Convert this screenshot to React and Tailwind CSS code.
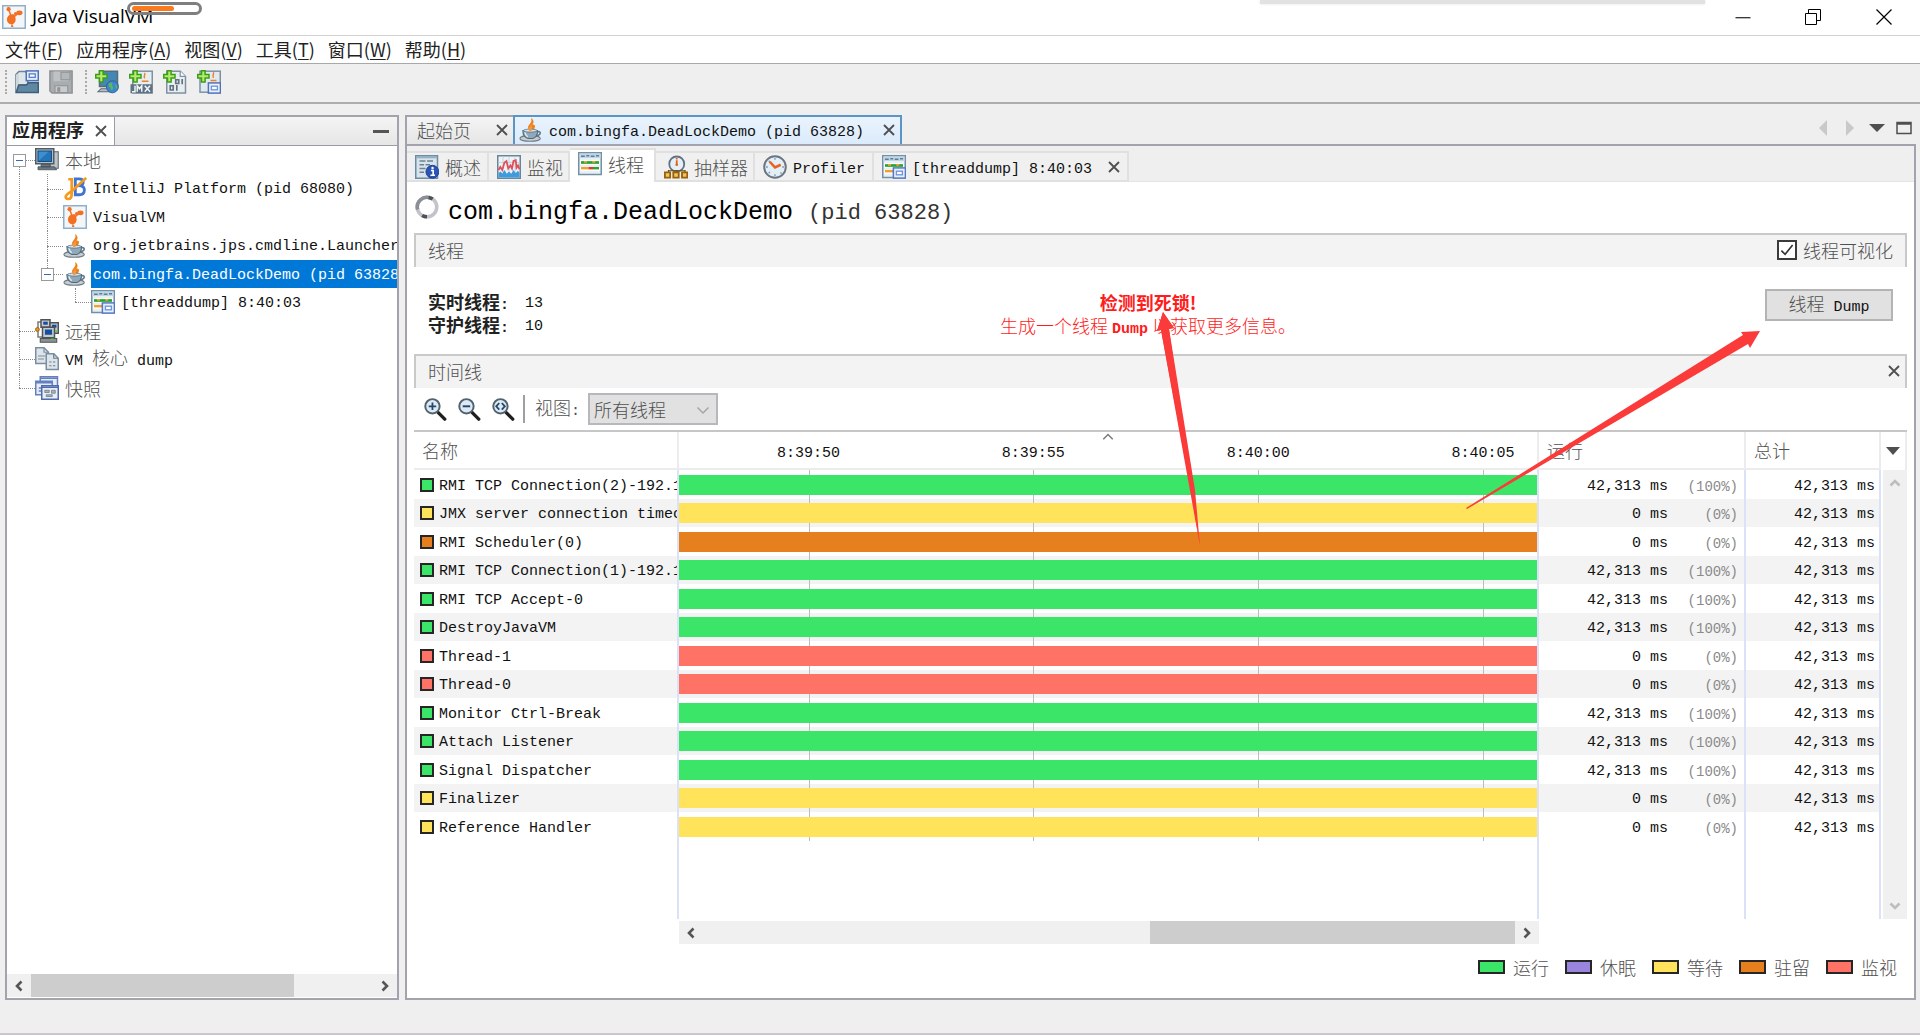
const MONO = "font-['Liberation_Mono','Noto_Sans_CJK_SC',monospace] text-[15px]";
const CJK = "font-['Noto_Sans_CJK_SC',sans-serif] text-[18px] font-light text-[#505050]";
const CJK_BOLD = "font-['Noto_Sans_CJK_SC',sans-serif] text-[18px] font-bold";

const MENUS = [
  ["文件", "F"], ["应用程序", "A"], ["视图", "V"], ["工具", "T"], ["窗口", "W"], ["帮助", "H"],
];

const GREEN = "bg-[#3be567]";
const YELLOW = "bg-[#ffe35a]";
const ORANGE = "bg-[#e67f1e]";
const RED = "bg-[#ff7266]";
const PURPLE = "bg-[#9a85de]";

const THREADS = [
  { name: "RMI TCP Connection(2)-192.1", color: GREEN, running: true },
  { name: "JMX server connection timeout", color: YELLOW },
  { name: "RMI Scheduler(0)", color: ORANGE },
  { name: "RMI TCP Connection(1)-192.1", color: GREEN, running: true },
  { name: "RMI TCP Accept-0", color: GREEN, running: true },
  { name: "DestroyJavaVM", color: GREEN, running: true },
  { name: "Thread-1", color: RED },
  { name: "Thread-0", color: RED },
  { name: "Monitor Ctrl-Break", color: GREEN, running: true },
  { name: "Attach Listener", color: GREEN, running: true },
  { name: "Signal Dispatcher", color: GREEN, running: true },
  { name: "Finalizer", color: YELLOW },
  { name: "Reference Handler", color: YELLOW },
];

const TICKS = [
  { time: "8:39:50", at: 15.1 },
  { time: "8:39:55", at: 41.3 },
  { time: "8:40:00", at: 67.5 },
  { time: "8:40:05", at: 93.7 },
];

const LEGEND = [
  ["运行", GREEN], ["休眠", PURPLE], ["等待", YELLOW], ["驻留", ORANGE], ["监视", RED],
];

/* ---------- icons ---------- */

function Svg({ size = 24, box = 16, className = "", children }) {
  return (
    <svg width={size} height={size} viewBox={`0 0 ${box} ${box}`} className={`shrink-0 ${className}`} aria-hidden="true">
      {children}
    </svg>
  );
}

function VisualVmIcon() {
  return (
    <Svg>
      <rect x="0.5" y="0.5" width="15" height="15" fill="#f4f5f6" stroke="#8fb0cc" />
      <circle cx="4.4" cy="2.8" r="1.4" fill="#f36f21" />
      <path d="M4.600 3.500l1.400 3.500" stroke="#f36f21" strokeWidth="1" />
      <ellipse cx="6.2" cy="9.600" rx="2.900" ry="3.300" fill="#f36f21" />
      <path d="M6.500 6.200h2v2zM6.500 12l1.200 2.600H6z" fill="#f36f21" />
      <path d="M8 8l2.600-2.400" stroke="#f36f21" />
      <ellipse cx="11.6" cy="5.200" rx="2.1" ry="1.6" fill="#f36f21" />
      <circle cx="9" cy="5.600" r="1" fill="#f36f21" />
    </Svg>
  );
}

function JavaIcon() {
  return (
    <Svg>
      <path d="M7.6 8.2C4.500 6.500 6.800 4.600 7.800 3.200c.6-.9.6-1.900.2-3.200 2 1.300 2.200 3 .9 4.300 2.400-.3 2.300 2.400.2 3.900z" fill="#f08019" />
      <ellipse cx="7.4" cy="13.600" rx="6.800" ry="1.900" fill="#c7cdd1" stroke="#717c85" strokeWidth="0.7" />
      <path d="M12 9.300c2.600-.9 3.400 1.700-.8 2.600" fill="none" stroke="#607a8d" strokeWidth="1.1" />
      <path d="M2.600 8.300h9.700c.3 3-1.300 5-3.100 5.300H6C4 13 2.500 11.400 2.600 8.300z" fill="#8fa9bb" stroke="#516a7c" strokeWidth="0.7" />
      <path d="M4 9.500c.2 1.500.8 2.400 1.800 3" stroke="#e4edf3" fill="none" />
      <ellipse cx="7.5" cy="8.4" rx="4.6" ry="1" fill="#d9e2e8" stroke="#516a7c" strokeWidth="0.5" />
      <path d="M7 8.600c-1.600-1.900.6-2.700 1.200-4.200.8 1.500.8 2.800 0 4.200z" fill="#f6953a" />
    </Svg>
  );
}

function IntellijIcon() {
  return (
    <Svg>
      <path d="M8.200 1.200h2.600c3.600 0 3.300 4 .6 4.600 4 .6 3.700 6-.4 6H8.200z" fill="none" stroke="#3f74d1" strokeWidth="1.9" />
      <path d="M8.200 6h3.500" stroke="#3f74d1" strokeWidth="1.5" />
      <path d="M3.500 1.500h2.300v9.800c0 4.600-5 4-3.800 1.200.6-1.300 2.200-2 4-3.200L15.500.6" fill="none" stroke="#f59a1b" strokeWidth="1.8" />
    </Svg>
  );
}

function LocalIcon() {
  return (
    <Svg>
      <rect x="10" y="2.5" width="5.5" height="11" fill="#bdc4ca" stroke="#5d6871" strokeWidth="0.7" />
      <rect x="0.5" y="0.5" width="12" height="10" fill="#b9c0c6" stroke="#4f5c66" />
      <rect x="2" y="2" width="9" height="7" fill="#2275b8" stroke="#174d80" strokeWidth="0.7" />
      <path d="M2.500 8.500L9 2.500H2.500z" fill="#3d8fce" />
      <path d="M4 11h6v1.500H4zM2 12.500h11l1.500 2H2z" fill="#6c7983" stroke="#414c55" strokeWidth="0.5" />
    </Svg>
  );
}

function RemoteIcon() {
  return (
    <Svg>
      <path d="M5 2H2v10h3" fill="none" stroke="#7b7b7b" />
      <circle cx="1.6" cy="7" r="1.3" fill="#e8921f" stroke="#8a540c" strokeWidth="0.5" />
      <rect x="4" y="0.5" width="6" height="5" fill="#c5cbd0" stroke="#4f5357" />
      <rect x="5.5" y="1.8" width="3" height="2" fill="#164d9f" />
      <rect x="10" y="2.5" width="5.5" height="7" fill="#c5cbd0" stroke="#4f5357" />
      <rect x="11.3" y="3.8" width="3" height="2" fill="#164d9f" />
      <rect x="5" y="5.5" width="8" height="7" fill="#c5cbd0" stroke="#4f5357" />
      <rect x="6.6" y="7" width="4.8" height="3.5" fill="#164d9f" />
      <path d="M3.500 13h11v2.500h-11z" fill="#8a9299" stroke="#4f5357" strokeWidth="0.7" />
      <path d="M10.500 13.500h2M13.500 8h1.500" stroke="#54cc2c" />
    </Svg>
  );
}

function CoreDumpIcon() {
  return (
    <Svg>
      <path d="M.5.5H6L9 3.500v7.500H.5z" fill="#dde4ea" stroke="#7b8ea0" />
      <path d="M6 .5v3h3M2 6h5M2 8h4" fill="none" stroke="#7b8ea0" strokeWidth="0.8" />
      <path d="M7.500 4.500h5l3 3V15h-8z" fill="#dde4ea" stroke="#7b8ea0" />
      <path d="M12.500 4.500v3h3M9.500 10H11m1 0h1.500M9.500 12.500H11m1 0h1.500" fill="none" stroke="#687b8d" strokeWidth="0.8" />
    </Svg>
  );
}

function SnapshotIcon() {
  return (
    <Svg>
      <rect x="3.5" y="0.5" width="11.5" height="9" fill="#e6ecf6" stroke="#6480bf" />
      <path d="M3.500 1.500H15" stroke="#6480bf" />
      <rect x="0.5" y="3.5" width="11" height="9" fill="#e6ecf6" stroke="#6480bf" />
      <path d="M.5 4.500h11M2.500 8h2M2.500 10h2" stroke="#6480bf" />
      <rect x="4.5" y="6.5" width="11" height="9" fill="#e9eef4" stroke="#4e6bb0" />
      <path d="M4.500 7.500h11" stroke="#4e6bb0" />
      <path d="M6.500 9.500h3V11h-3zM11 9.500h2.500v2H11zM7.500 12.500h4v1.200h-4z" fill="#a7b3be" stroke="#6b7987" strokeWidth="0.5" />
    </Svg>
  );
}

function ThreadsIcon({ dump }) {
  return (
    <Svg>
      <rect x="0.5" y="0.5" width="15" height="14.5" fill="#e9f0f5" stroke="#7590a5" />
      <path d="M1 2.500h14" stroke="#c0d6e6" strokeWidth="3" />
      <path d="M2 2.800h2.500m1-.3h2m1 .3H11m1-.3h2" stroke="#5d7e98" strokeWidth="0.9" />
      <path d="M1.500 5.500h13v3h-13zM1.500 10h13v2.500h-13z" fill="#fff" />
      <path d="M2 7h12" stroke="#27a52b" strokeWidth="1.8" />
      <path d="M4 6.600h2m3.500 0h2" stroke="#f0a32c" strokeWidth="1.2" />
      <path d="M2 10.800h5" stroke="#f0a32c" strokeWidth="1.6" />
      <path d="M7 10.800h3" stroke="#e03a26" strokeWidth="1.6" />
      <path d="M10 10.800h4" stroke="#27a52b" strokeWidth="1.6" />
      {dump && (
        <>
          <rect x="7.6" y="8.6" width="8" height="6.8" fill="#e8f1fd" stroke="#5678c4" />
          <rect x="9.6" y="10.8" width="4" height="2.4" fill="#fff" stroke="#6e95de" strokeWidth="0.9" />
        </>
      )}
    </Svg>
  );
}

function OverviewIcon() {
  return (
    <Svg>
      <rect x="0.5" y="0.5" width="14.5" height="15" fill="#d8e4ec" stroke="#6d8ba3" />
      <path d="M1 1.500h13.500" stroke="#93b0c6" strokeWidth="1.4" />
      <path d="M3 4h4m1 0h4M3 6.500h3m1 0h3M3 9h4M3 11.500h3" stroke="#6d8292" strokeWidth="0.9" />
      <circle cx="11.6" cy="11.2" r="4.3" fill="#2a55b5" stroke="#153a89" strokeWidth="0.6" />
      <path d="M10.600 10.300h1.500v3M10.300 13.500h3" stroke="#fff" strokeWidth="1.1" fill="none" />
      <circle cx="11.7" cy="8.7" r="0.8" fill="#fff" />
    </Svg>
  );
}

function MonitorIcon() {
  return (
    <Svg>
      <rect x="0.5" y="0.5" width="15" height="15" fill="#edf3f7" stroke="#67859b" />
      <path d="M4 1v14M8 1v14M12 1v14M1 5h14" stroke="#c4d2dc" strokeWidth="0.6" />
      <path d="M1 15v-3l1.500-1 1 1.500L5 10l1.500 2.500L8 11l1.500 1.500L11 10l1.500 2L14 10.500l1 1.500v3z" fill="#3e9bdd" />
      <path d="M1 10l1.200-2 1.300 2L5 5l1.300-1 1.200 5 1.500-2 1 2 1-5 1.500-.500.500 5 1-1.500 1 2.500" fill="none" stroke="#e0505a" strokeWidth="1.2" />
    </Svg>
  );
}

function SamplerIcon() {
  return (
    <Svg>
      <circle cx="8.5" cy="6" r="5" fill="#e6eff6" stroke="#5f7183" strokeWidth="1.2" />
      <path d="M8.500 2v1m0 .5v3" stroke="#e0641c" strokeWidth="1.2" />
      <circle cx="8.5" cy="6.5" r="0.9" fill="#e0641c" />
      <path d="M3 10.500h11M3 10v2m5.500-2v2m5.500-2v2" stroke="#6d4b10" strokeWidth="0.8" />
      <path d="M.6 11.600h3.500v3.500H.6zM6.200 11.600h3.600v3.500H6.200zM12 11.600h3.500v3.500H12z" fill="#f3c457" stroke="#96600c" strokeWidth="1.2" />
    </Svg>
  );
}

function ProfilerIcon() {
  return (
    <Svg>
      <circle cx="8" cy="8" r="7.2" fill="#e2eef8" stroke="#6b7680" strokeWidth="1.3" />
      <path d="M8 2v1.200M8 12.800V14M2 8h1.200M12.800 8H14M3.800 3.800l.8.8M11.600 11.600l.8.8M3.800 12.200l.8-.8" stroke="#7c98b0" strokeWidth="0.9" />
      <path d="M4.500 4.500L8 8.300l3.800-1.800" fill="none" stroke="#e8641c" strokeWidth="1.7" />
    </Svg>
  );
}

function Plus() {
  return <path d="M3 .5h2.400V3H8v2.400H5.400V8H3V5.400H.5V3H3z" fill="#b5ec6c" stroke="#3b9e17" />;
}

function OpenIcon() {
  return (
    <Svg>
      <path d="M.6 15V3l2-2H7l1.500 2v7H.6z" fill="#dfe6ea" stroke="#6c8495" />
      <path d="M.6 3v12l2-5V3z" fill="#cdd7dd" />
      <rect x="7.5" y="0.6" width="8" height="6.5" fill="#e2ecfa" stroke="#5272b8" />
      <rect x="9.5" y="2.6" width="4" height="2.3" fill="#fff" stroke="#5c83ca" strokeWidth="0.9" />
      <path d="M2.500 10h5L9 8.500h6.500V15H.8z" fill="#5f88a3" stroke="#3d5f77" />
    </Svg>
  );
}

function SaveIcon() {
  return (
    <Svg>
      <path d="M.6.6h14.800v14.800H2L.6 14z" fill="#a9adb0" stroke="#8e9396" />
      <path d="M3 1h10v6.500H3z" fill="#bfc2c4" />
      <rect x="8" y="1.5" width="6" height="5" fill="#b3b7ba" stroke="#8f9498" strokeWidth="0.7" />
      <path d="M4 10.500h8.500V15H4z" fill="#c8cbcd" stroke="#8e9396" strokeWidth="0.7" />
      <path d="M5.500 11.500h2v3h-2z" fill="#8e9396" />
    </Svg>
  );
}

function RemoteAddIcon() {
  return (
    <Svg>
      <path d="M3 .8h12V11H3z" fill="#4287b5" stroke="#5b6a75" />
      <path d="M4 12.500h8v2H2z" fill="#b8bec3" stroke="#5b6a75" strokeWidth="0.7" />
      <circle cx="11.6" cy="11.2" r="4" fill="#3a86cf" stroke="#2c5f94" strokeWidth="0.6" />
      <path d="M9 9.500c1.500-2 3-1 2.500.5s1.500 1 .5 2.500-1 1.500-1.500 0-1.500-1-1.500-3zM13.500 9l1.500 2-1 2z" fill="#5cb757" />
      <Plus />
    </Svg>
  );
}

function JmxAddIcon() {
  return (
    <Svg>
      <rect x="2.5" y="0.8" width="13" height="14.5" fill="#e8edf1" stroke="#7c92a4" />
      <path d="M10.300 2c1 1.200-1 2 .2 3.600M8.500 7.500H13" stroke="#e98328" fill="none" />
      <rect x="1" y="9.5" width="14.500" height="6" fill="#5d7282" />
      <path d="M4 10.500v4H2m3.500 0v-4L7 12.500l1.500-2v4m2-4l3.500 4m0-4l-3.500 4" stroke="#f2f5f7" fill="none" />
      <Plus />
    </Svg>
  );
}

function CoreAddIcon() {
  return (
    <Svg>
      <path d="M2.500.8h9L15 4.300v11H2.500z" fill="#e8edf1" stroke="#7c92a4" />
      <path d="M11.500.8v3.500H15" fill="#fff" stroke="#7c92a4" strokeWidth="0.8" />
      <path d="M8.500 6.500h2V9h-2zM12.800 6v3.500M4.800 10.500h2v2.800h-2zM9.200 10v3.800" fill="none" stroke="#60727f" strokeWidth="1.1" />
      <Plus />
    </Svg>
  );
}

function SnapshotAddIcon() {
  return (
    <Svg>
      <rect x="2" y="0.8" width="13.5" height="14" fill="#e3eaef" stroke="#7c92a4" />
      <path d="M10.800 1.500c1 1.200-1 2 .2 3.800M9 7h4" stroke="#e98328" fill="none" />
      <rect x="7.6" y="8.6" width="8" height="6.8" fill="#e8f1fd" stroke="#5272b8" />
      <rect x="9.6" y="10.8" width="4" height="2.4" fill="#fff" stroke="#6e95de" strokeWidth="0.9" />
      <Plus />
    </Svg>
  );
}

function ZoomIcon({ kind }) {
  return (
    <Svg>
      <path d="M9.500 9.800l5 5" stroke="#1f1f1f" strokeWidth="2.2" strokeLinecap="round" />
      <circle cx="6.3" cy="6.2" r="4.8" fill="#dceaf5" stroke="#52616e" strokeWidth="1.3" />
      {kind === "in" && <path d="M3.800 6.200h5M6.300 3.700v5" stroke="#24476b" strokeWidth="1.2" />}
      {kind === "out" && <path d="M3.800 6.200h5" stroke="#24476b" strokeWidth="1.3" />}
      {kind === "fit" && <path d="M5.500 4l-2 2.200 2 2.200M7.200 4l2 2.200-2 2.200" fill="none" stroke="#24476b" strokeWidth="1.2" />}
    </Svg>
  );
}

function CloseIcon({ size = 14 }) {
  return (
    <Svg size={size} box={14}>
      <path d="M2 2l10 10M12 2L2 12" stroke="#4f4f4f" strokeWidth="1.8" />
    </Svg>
  );
}

function Chevron({ d, color = "#555" }) {
  return (
    <Svg size={14} box={14}>
      <path d={d} fill="none" stroke={color} strokeWidth="2.6" />
    </Svg>
  );
}

const LEFT = "M9.5 2.5L5 7l4.5 4.5";
const RIGHT = "M4.5 2.5L9 7l-4.500 4.500";
const UP = "M2.5 9.5L7 5l4.500 4.500";
const DOWN = "M2.5 4.5L7 9l4.500-4.500";

/* ---------- window chrome ---------- */

function TitleBar() {
  return (
    <header className="relative flex h-9 shrink-0 items-center border-b border-[#d3d3d3] bg-white pb-0.5 pl-0.5">
      <VisualVmIcon />
      <h1 className="ml-1.5 font-['Open_Sans',sans-serif] text-[19px] text-black">Java VisualVM</h1>
      <div className="absolute left-[127px] top-0.5 h-[13px] w-[75px] rounded-full border-[3px] border-[#7f7f7f] px-0.5 py-px">
        <div className="h-[5px] w-[42px] rounded-full bg-[#fb7a1e]" />
      </div>
      <div className="absolute left-[1260px] top-0 h-1 w-[445px] bg-[#e2e2e2] shadow-[0_0_3px_#e2e2e2]" />
      <div className="ml-auto flex h-full">
        <button type="button" aria-label="最小化" className="flex w-[70px] items-center justify-center">
          <Svg><path d="M3 8.500h10" stroke="#000" strokeWidth="0.7" /></Svg>
        </button>
        <button type="button" aria-label="还原" className="flex w-[70px] items-center justify-center">
          <Svg size={16}>
            <path d="M.5 4.500h11v11H.5zM3.500 4V.500h12v11H12" fill="none" stroke="#000" />
          </Svg>
        </button>
        <button type="button" aria-label="关闭" className="flex w-[72px] items-center justify-center">
          <Svg size={16}><path d="M.5.5l15 15M15.500.5l-15 15" stroke="#000" strokeWidth="1.2" /></Svg>
        </button>
      </div>
    </header>
  );
}

function MenuBar() {
  return (
    <nav className="flex h-7 shrink-0 items-start gap-[13px] border-b border-[#a9a9a9] bg-white pl-[5px]">
      {MENUS.map(([label, key]) => (
        <button key={key} type="button" className="font-['Noto_Sans_CJK_SC',sans-serif] text-[18px] leading-[26px] text-[#222]">
          {label}(<span className="underline underline-offset-2">{key}</span>)
        </button>
      ))}
    </nav>
  );
}

function Grip() {
  return <div className="-mr-0.5 h-6 border-l-2 border-dotted border-[#aaa]" />;
}

function ToolBar() {
  return (
    <div className="flex h-10 shrink-0 items-center border-b-2 border-[#adadad] pb-0.5 pl-[5px]">
      <div className="flex gap-2.5">
        <Grip />
        <button type="button" aria-label="装入"><OpenIcon /></button>
        <button type="button" aria-label="另存为"><SaveIcon /></button>
      </div>
      <div className="ml-3 flex gap-2.5">
        <Grip />
        <button type="button" aria-label="添加远程主机"><RemoteAddIcon /></button>
        <button type="button" aria-label="添加 JMX 连接"><JmxAddIcon /></button>
        <button type="button" aria-label="添加 VM 核心 dump"><CoreAddIcon /></button>
        <button type="button" aria-label="添加快照"><SnapshotAddIcon /></button>
      </div>
    </div>
  );
}

/* ---------- applications tree ---------- */

// guides: one letter per indent level
// b = root box, e = nested box, v = line, t = tee, l = corner, s = space
const TREE = [
  { guides: "b", icon: <LocalIcon />, label: "本地", cjk: true },
  { guides: "vt", icon: <IntellijIcon />, label: "IntelliJ Platform (pid 68080)" },
  { guides: "vt", icon: <VisualVmIcon />, label: "VisualVM" },
  { guides: "vt", icon: <JavaIcon />, label: "org.jetbrains.jps.cmdline.Launcher" },
  { guides: "ve", icon: <JavaIcon />, label: "com.bingfa.DeadLockDemo (pid 63828)", selected: true },
  { guides: "vsl", icon: <ThreadsIcon dump />, label: "[threaddump] 8:40:03" },
  { guides: "t", icon: <RemoteIcon />, label: "远程", cjk: true },
  { guides: "t", icon: <CoreDumpIcon />, label: <>VM <span className={`${CJK} leading-6`}>核心</span> dump</> },
  { guides: "l", icon: <SnapshotIcon />, label: "快照", cjk: true },
];

const V_LINE = {
  b: "top-1/2 bottom-0",
  e: "top-0 bottom-1/2",
  v: "top-0 bottom-0",
  t: "top-0 bottom-0",
  l: "top-0 bottom-1/2",
};

function Guide({ kind }) {
  const box = kind === "b" || kind === "e";
  return (
    <span className="relative w-7 shrink-0 self-stretch">
      {V_LINE[kind] && <span className={`absolute left-3 border-l border-dotted border-[#8a8a8a] ${V_LINE[kind]}`} />}
      {"betl".includes(kind) && <span className="absolute left-3 right-0 top-1/2 border-t border-dotted border-[#8a8a8a]" />}
      {box && (
        <span className="absolute left-1.5 top-2 flex size-[13px] items-center border border-[#9a9a9a] bg-white px-0.5">
          <span className="h-px w-full bg-[#3c66b4]" />
        </span>
      )}
    </span>
  );
}

function Sidebar() {
  return (
    <aside className="flex w-[394px] shrink-0 flex-col border-2 border-[#a3a3ad] bg-white">
      <div className="flex h-[29px] shrink-0 border-b border-[#9b9ba6] bg-linear-to-b from-[#f4f4f4] to-[#e6e6e6]">
        <div className="flex w-[108px] items-center gap-2.5 border-r border-[#9b9ba6] bg-white pl-[5px]">
          <h2 className={`${CJK_BOLD} pb-1 leading-6 text-[#222]`}>应用程序</h2>
          <button type="button" aria-label="关闭应用程序"><CloseIcon /></button>
        </div>
        <button type="button" aria-label="最小化窗口组" className="ml-auto mr-2 flex items-center">
          <span className="h-[3px] w-4 bg-[#555]" />
        </button>
      </div>
      <ul className="flex h-64 flex-col overflow-hidden">
        {TREE.map((node, i) => (
          <li key={i} className="flex min-h-0 flex-1 items-center whitespace-nowrap">
            {[...node.guides].map((g, j) => <Guide key={j} kind={g} />)}
            {node.icon}
            <span
              className={[
                node.cjk ? `${CJK} leading-7` : `${MONO} leading-8`,
                "ml-1 flex-1 self-stretch pl-0.5",
                node.selected ? "bg-[#0078d7] text-white" : "",
                !node.selected && !node.cjk ? "text-[#111]" : "",
              ].join(" ")}
            >
              {node.label}
            </span>
          </li>
        ))}
      </ul>
      <div className="mb-px mt-auto flex h-[23px] items-center bg-[#f0f0f0]">
        <span className="flex w-6 justify-center"><Chevron d={LEFT} /></span>
        <div className="flex h-full flex-1"><div className="w-[77%] bg-[#cdcdcd]" /></div>
        <span className="flex w-6 justify-center"><Chevron d={RIGHT} /></span>
      </div>
    </aside>
  );
}

/* ---------- editor area ---------- */

function DocumentTabs() {
  return (
    <div className="flex h-[31px] shrink-0 border-b-2 border-[#a3a3ad]">
      <div className="flex w-[108px] items-center border-l-2 border-t-2 border-[#a3a3ad] bg-linear-to-b from-[#f4f4f4] to-[#e6e6e6] pb-0.5 pl-2.5 pr-1">
        <button type="button" className={`${CJK} leading-6`}>起始页</button>
        <button type="button" aria-label="关闭起始页" className="ml-auto"><CloseIcon /></button>
      </div>
      <div className="flex w-[389px] items-center border-2 border-b-0 border-[#5a95c5] bg-linear-to-b from-[#e9f3fd] to-[#dcebfb] pb-0.5 pl-1 pr-1">
        <JavaIcon />
        <button type="button" className={`${MONO} ml-1.5 pt-1.5 leading-5 text-[#111]`}>com.bingfa.DeadLockDemo (pid 63828)</button>
        <button type="button" aria-label="关闭" className="ml-auto"><CloseIcon /></button>
      </div>
      <div className="ml-auto flex items-center gap-[11px] pb-1 pr-1">
        <button type="button" aria-label="向左滚动"><Svg size={16}><path d="M12 0v16L4 8z" fill="#c9c9c9" /></Svg></button>
        <button type="button" aria-label="向右滚动"><Svg size={16}><path d="M4 0v16l8-8z" fill="#c9c9c9" /></Svg></button>
        <button type="button" aria-label="文档列表"><Svg size={16}><path d="M0 4h16l-8 8z" fill="#4f4f4f" /></Svg></button>
        <button type="button" aria-label="最大化"><Svg size={16}><path d="M1 2.500h14v11H1z" fill="none" stroke="#4f4f4f" strokeWidth="1.5" /><path d="M1 3.500h14" stroke="#4f4f4f" strokeWidth="2.5" /></Svg></button>
      </div>
    </div>
  );
}

const VIEW_TABS = [
  { icon: <OverviewIcon />, label: "概述", cls: "w-[82px]", cjk: true },
  { icon: <MonitorIcon />, label: "监视", cls: "w-[81px]", cjk: true },
  { icon: <ThreadsIcon />, label: "线程", cls: "w-[86px]", cjk: true, active: true },
  { icon: <SamplerIcon />, label: "抽样器", cls: "w-[99px]", cjk: true },
  { icon: <ProfilerIcon />, label: "Profiler", cls: "w-[119px]" },
  { icon: <ThreadsIcon dump />, label: "[threaddump] 8:40:03", cls: "w-[255px]", closable: true },
];

function ViewTabs() {
  return (
    <div className="flex h-9 shrink-0 items-end bg-[#efefef]">
      {VIEW_TABS.map((tab) => (
        <div
          key={tab.label}
          className={[
            "flex shrink-0 items-center border-r-2 border-t-2 border-[#e0e0e0] pl-2",
            tab.active ? "h-[34px] bg-white pb-1" : "h-[31px] border-b-2 bg-[#f0f0f0]",
            tab.cls,
          ].join(" ")}
        >
          {tab.icon}
          <button
            type="button"
            className={[
              "ml-1.5 whitespace-nowrap",
              tab.cjk ? `${CJK} leading-6` : `${MONO} pt-1.5 leading-5 text-[#111]`,
            ].join(" ")}
          >
            {tab.label}
          </button>
          {tab.closable && <button type="button" aria-label="关闭 threaddump" className="ml-auto mr-1.5"><CloseIcon /></button>}
        </div>
      ))}
      <div className="h-px flex-1 bg-[#e4e4e4]" />
    </div>
  );
}

function SectionBar({ title, children }) {
  return (
    <div className="flex h-[34px] shrink-0 items-center justify-between border-x-2 border-t-2 border-[#c9c9c9] bg-[#f3f3f3] pb-0.5 pl-3">
      <h3 className={`${CJK} leading-6`}>{title}</h3>
      {children}
    </div>
  );
}

function ThreadSummary() {
  return (
    <div className="flex h-[87px] shrink-0 items-start px-3.5">
      <dl className={`${MONO} pt-6 text-[#111]`}>
        {[["实时线程", "13"], ["守护线程", "10"]].map(([k, v]) => (
          <div key={k} className="flex h-[23px] items-center">
            <dt className={`${CJK_BOLD} text-[#222]`}>{k}<span className={MONO}>:</span></dt>
            <dd className="ml-4 pt-1">{v}</dd>
          </div>
        ))}
      </dl>
      <div className="flex-1 pr-3 pt-6 text-center text-[#ff1c1c]">
        <p className={`${CJK_BOLD} leading-[23px]`}>检测到死锁!</p>
        <p className="font-['Noto_Sans_CJK_SC',sans-serif] text-[18px] font-light leading-[23px]">
          生成一个线程 <span className={`${MONO} font-bold`}>Dump</span> 以获取更多信息。
        </p>
      </div>
      <button type="button" className={`${MONO} mt-[22px] h-8 w-32 border-2 border-[#b4b4b4] bg-[#e1e1e1] leading-6 text-[#111]`}>
        <span className={CJK}>线程</span> Dump
      </button>
    </div>
  );
}

function TimelineTools() {
  return (
    <div className="flex h-[42px] shrink-0 items-center gap-2 pl-[9px]">
      <button type="button" aria-label="放大"><ZoomIcon kind="in" /></button>
      <button type="button" aria-label="缩小" className="ml-0.5"><ZoomIcon kind="out" /></button>
      <button type="button" aria-label="缩放至适合" className="ml-0.5"><ZoomIcon kind="fit" /></button>
      <div className="h-7 w-0.5 bg-[#9f9f9f]" />
      <label htmlFor="thread-view" className={`${CJK} pl-0.5 leading-6`}>视图<span className={MONO}>:</span></label>
      <div className="relative">
        <select id="thread-view" className={`${CJK} h-8 w-[130px] appearance-none border-2 border-[#b7b7bd] bg-[#e1e1e1] pl-1 leading-6`}>
          <option>所有线程</option>
        </select>
        <Svg size={14} box={14} className="pointer-events-none absolute right-2 top-2.5">
          <path d="M1.500 4.500L7 10l5.500-5.500" fill="none" stroke="#a5a5a5" strokeWidth="1.5" />
        </Svg>
      </div>
    </div>
  );
}

const HEAD_CLS = `${CJK} relative h-[38px] border-b-2 border-r-2 border-[#ececec] px-2 text-left leading-6`;
const CELL_LINE = "border-r-2 border-[#dbe2f7]";

function ThreadTable() {
  return (
    <table className={`${MONO} h-full w-full flex-1 table-fixed border-separate border-spacing-0 text-[#111]`}>
      <colgroup>
        <col className="w-[265px]" />
        <col />
        <col className="w-[207px]" />
        <col className="w-[135px]" />
      </colgroup>
      <thead>
        <tr>
          <th scope="col" className={HEAD_CLS}>名称</th>
          <th scope="col" aria-label="时间线" className={`${HEAD_CLS} !px-0`}>
            <Svg size={12} box={14} className="absolute left-1/2 top-0 -translate-x-1/2">
              <path d="M1.500 8.500L7 3l5.500 5.500" fill="none" stroke="#777" strokeWidth="1.6" />
            </Svg>
            {TICKS.map((t) => (
              <span
                key={t.time}
                className={`${MONO} absolute bottom-0.5 -translate-x-1/2 font-normal text-[#111]`}
                style={{ left: `${t.at}%` }}
              >
                {t.time}
              </span>
            ))}
          </th>
          <th scope="col" className={HEAD_CLS}>运行</th>
          <th scope="col" className={HEAD_CLS}>总计</th>
        </tr>
      </thead>
      <tbody>
        {THREADS.map((t) => (
          <tr key={t.name} className="odd:h-[29px] even:h-[28px] even:bg-[#f3f3f3]">
            <td className={`${CELL_LINE} overflow-hidden p-0`}>
              <div className="flex items-center gap-[5px] whitespace-nowrap pl-1.5">
                <span className={`size-3.5 shrink-0 border-2 border-[#262626] ${t.color}`} />
                <span className="pt-1 leading-6">{t.name}</span>
              </div>
            </td>
            <td className={`${CELL_LINE} relative p-0`}>
              {TICKS.map((tick) => (
                <span key={tick.time} className="absolute inset-y-0 w-px bg-[#bdbdbd]" style={{ left: `${tick.at}%` }} />
              ))}
              <div className={`relative h-5 ${t.color}`} />
            </td>
            <td className={`${CELL_LINE} p-0`}>
              <div className="flex justify-end pr-1.5 pt-1 leading-6">
                <span>{t.running ? "42,313 ms" : "0 ms"}</span>
                <span className="w-[70px] text-right text-[14px] text-[#8a8a8a]">{t.running ? "(100%)" : "(0%)"}</span>
              </div>
            </td>
            <td className={`${CELL_LINE} p-0 pr-1 pt-1 text-right leading-6`}>42,313 ms</td>
          </tr>
        ))}
        <tr className="h-full">
          {[0, 1, 2, 3].map((i) => <td key={i} className={CELL_LINE} />)}
        </tr>
      </tbody>
    </table>
  );
}

function Timeline() {
  return (
    <>
      <div className="flex min-h-0 flex-1 border-t-2 border-[#c6c6c6]">
        <ThreadTable />
        <div className="flex w-[26px] shrink-0 flex-col">
          <button type="button" aria-label="选择列" className="flex h-[38px] shrink-0 items-center justify-center border-r-2 border-[#ececec]">
            <Svg size={14} box={14}><path d="M0 3h14l-7 8z" fill="#4f4f4f" /></Svg>
          </button>
          <div className="ml-0.5 flex flex-1 flex-col items-center justify-between bg-[#f0f0f0] py-1.5">
            <Chevron d={UP} color="#bdbdbd" />
            <Chevron d={DOWN} color="#bdbdbd" />
          </div>
        </div>
      </div>
      <div className="mt-0.5 flex h-[23px] shrink-0 pl-[265px] pr-[368px]">
        <div className="flex flex-1 items-center bg-[#f0f0f0]">
          <span className="flex w-6 justify-center"><Chevron d={LEFT} /></span>
          <div className="flex h-full flex-1 justify-end"><div className="w-[45%] bg-[#cdcdcd]" /></div>
          <span className="flex w-6 justify-center"><Chevron d={RIGHT} /></span>
        </div>
      </div>
    </>
  );
}

function Legend() {
  return (
    <ul className="mb-2 flex h-[46px] shrink-0 items-center justify-end gap-4 pr-2.5">
      {LEGEND.map(([label, color]) => (
        <li key={label} className="flex items-center gap-2">
          <span className={`h-3.5 w-[27px] border-2 border-[#262626] ${color}`} />
          <span className={CJK}>{label}</span>
        </li>
      ))}
    </ul>
  );
}

function ThreadsView() {
  return (
    <section className="flex min-h-0 flex-1 flex-col pl-[7px] pr-[7px]">
      <div className="flex h-[51px] shrink-0 items-center gap-2">
        <Svg size={26} className="-mt-0.5">
          <circle cx="8" cy="8" r="6" fill="none" stroke="#c3c4ca" strokeWidth="2.2" />
          <path d="M2.200 9.500A6 6 0 0 1 9.800 2.300" fill="none" stroke="#8b8d97" strokeWidth="2.2" />
          <path d="M9 2.100a6 6 0 0 1 2.500 1M5 13.200a6 6 0 0 0 3 .8" fill="none" stroke="#4d4f59" strokeWidth="2.2" />
        </Svg>
        <h2 className="pt-3 font-['Liberation_Mono',monospace] text-[25px] leading-8 text-black">
          com.bingfa.DeadLockDemo <span className="text-[22px] text-[#333]">(pid 63828)</span>
        </h2>
      </div>
      <SectionBar title="线程">
        <label className={`${CJK} flex items-center gap-1.5 pr-3 leading-6`}>
          <span className="relative flex">
            <input type="checkbox" defaultChecked className="size-5 appearance-none border-2 border-[#3a3a3a] bg-white" />
            <Svg size={20} className="pointer-events-none absolute inset-0">
              <path d="M3.500 8.500l3 3L12.500 4" fill="none" stroke="#333" strokeWidth="1.3" />
            </Svg>
          </span>
          线程可视化
        </label>
      </SectionBar>
      <ThreadSummary />
      <SectionBar title="时间线">
        <button type="button" aria-label="关闭时间线" className="mr-1"><CloseIcon /></button>
      </SectionBar>
      <TimelineTools />
      <Timeline />
      <Legend />
    </section>
  );
}

function Arrows() {
  return (
    <svg className="pointer-events-none absolute left-0 top-0 h-[600px] w-[1800px]" viewBox="0 0 1800 600" aria-hidden="true">
      <g fill="#fb3a3a">
        <path d="M1163 312L1174 328L1169 329L1200 546L1161 330L1157 331Z" />
        <path d="M1163 312L1174 328L1169 329L1195 490L1200 546L1191 490L1161 330L1157 331Z" />
        <path d="M1760 331L1750 348L1748 344L1467 509L1466 508L1743 335L1741 332Z" />
      </g>
    </svg>
  );
}

export default function App() {
  return (
    <div className="relative flex h-screen min-h-[900px] flex-col overflow-hidden bg-[#efefef]">
      <TitleBar />
      <MenuBar />
      <ToolBar />
      <main className="flex min-h-0 flex-1 gap-1.5 pl-[5px] pr-1 pt-[11px]">
        <Sidebar />
        <div className="flex min-w-0 flex-1 flex-col">
          <DocumentTabs />
          <div className="flex min-h-0 flex-1 flex-col border-2 border-t-0 border-[#a3a3ad] bg-white">
            <ViewTabs />
            <ThreadsView />
          </div>
        </div>
      </main>
      <footer className="h-[35px] shrink-0 border-b-2 border-[#c9c6cf]" />
      <Arrows />
    </div>
  );
}
